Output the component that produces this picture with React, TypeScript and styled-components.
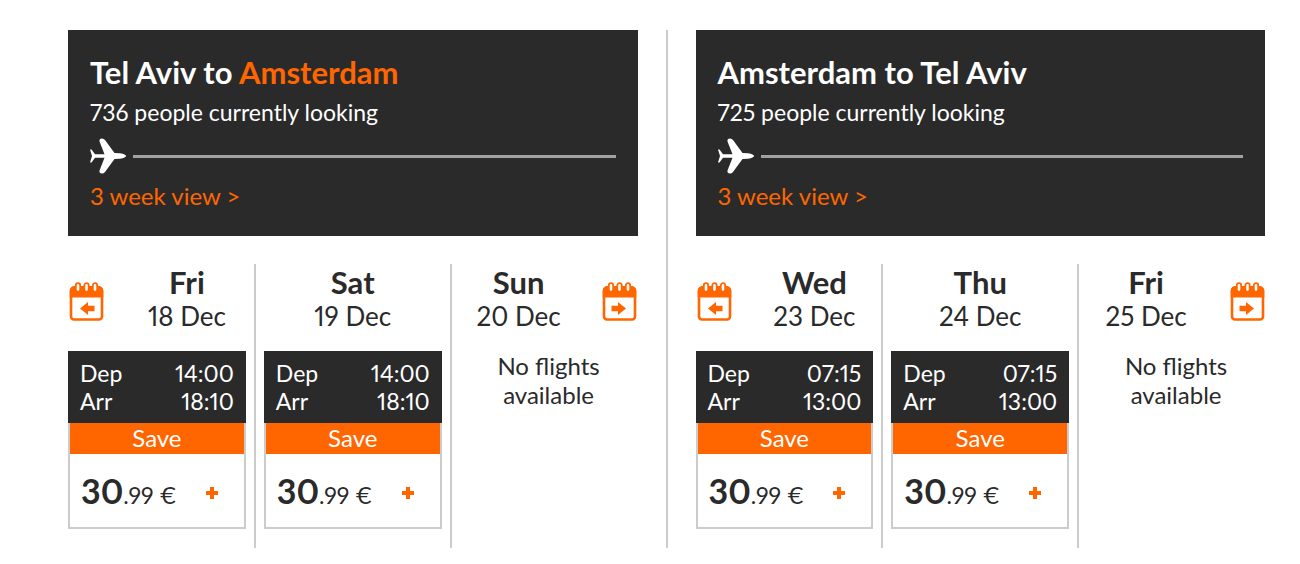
import React from 'react';
import styled, { createGlobalStyle } from 'styled-components';

const ink = '#2a2a2a';
const orange = '#ff6600';
const rule = '#cccccc';

const GlobalStyle = createGlobalStyle`
  *, *::before, *::after { box-sizing: border-box; }
  body {
    margin: 0;
    background: #ffffff;
    color: ${ink};
    font-family: Lato, "Liberation Sans", sans-serif;
    font-variant-numeric: proportional-nums;
  }
  h2, h3, p, dl, dt, dd { margin: 0; }
  button { font: inherit; color: inherit; border: 0; padding: 0; background: none; cursor: pointer; }
`;

const Page = styled.main`
  display: grid;
  grid-template-columns: minmax(0, 1fr) 2px minmax(0, 1fr);
  column-gap: 28px;
  padding: 30px 35px 16px 68px;
`;

const Divider = styled.div`
  background: ${rule};
`;

const Leg = styled.section`
  display: flex;
  flex-direction: column;
  gap: 28px;
`;

const Banner = styled.header`
  display: flex;
  flex-direction: column;
  align-items: stretch;
  padding: 24px 22px;
  height: 206px;
  background: ${ink};
  color: #ffffff;
`;

const Title = styled.h2`
  font-size: 31px;
  line-height: 36px;
  font-weight: 700;
  white-space: nowrap;
`;

const Highlight = styled.span`
  color: ${orange};
`;

const Looking = styled.p`
  font-size: 23px;
  line-height: 28px;
  margin-top: 8px;
  white-space: nowrap;
`;

const FlightPath = styled.div`
  display: flex;
  align-items: center;
  gap: 6px;
  margin-top: 12px;
  height: 36px;
`;

const Track = styled.div`
  flex: 1;
  height: 3px;
  background: #a3a0a0;
`;

const WeekLink = styled.a`
  align-self: flex-start;
  margin-top: 8px;
  font-size: 24px;
  line-height: 28px;
  color: ${orange};
  text-decoration: none;
`;

const Days = styled.div`
  display: grid;
  grid-template-columns: minmax(0, 1fr) 2px minmax(0, 1fr) 2px minmax(0, 1fr);
  column-gap: 8px;
`;

const Day = styled.article`
  padding-bottom: 19px;
`;

const DayHead = styled.div`
  display: flex;
  align-items: flex-start;
  gap: 24px;
  height: 87px;
`;

const DayLabel = styled.div`
  flex: 1;
  text-align: center;
  white-space: nowrap;
`;

const DayName = styled.h3`
  font-size: 31px;
  line-height: 36px;
  font-weight: 700;
`;

const DayDate = styled.p`
  font-size: 26px;
  line-height: 32px;
`;

const StepButton = styled.button`
  display: block;
  height: 40px;
  margin-top: 18px;
`;

const Fare = styled.div`
  display: flex;
  flex-direction: column;
  height: 178px;
  border: 2px solid ${rule};
  border-top: 0;
`;

const Times = styled.dl`
  display: grid;
  grid-template-columns: 1fr auto;
  margin: 0 -2px;
  padding: 8px 12px;
  height: 72px;
  font-size: 23px;
  line-height: 28px;
  text-align: right;
  background: ${ink};
  color: #ffffff;

  dt { text-align: left; }
`;

const Save = styled.div`
  height: 31px;
  font-size: 24px;
  line-height: 30px;
  text-align: center;
  background: ${orange};
  color: #ffffff;
`;

const PriceRow = styled.div`
  flex: 1;
  display: flex;
  align-items: center;
  justify-content: space-between;
  padding: 4px 26px 0 11px;
`;

const Price = styled.p`
  font-size: 23px;
  line-height: 36px;
  white-space: nowrap;
`;

const Whole = styled.strong`
  font-size: 34px;
  font-weight: 700;
`;

const Empty = styled.p`
  font-size: 24px;
  line-height: 29px;
  text-align: center;
`;

const Plane = () => (
  <svg width="37" height="36" viewBox="0 0 37 36" aria-hidden="true">
    <path
      fill="#ffffff"
      d="M0 11.5 L1.5 11.5 L5 16.2 L14.5 16.2 L9.5 3.5 Q9 0.5 12 0.5 Q13.8 0.5 15 2 L24.5 15 L30 15.2 Q36 16.2 36 18 Q36 19.8 30 20.8 L24.5 21 L15 34 Q13.8 35.5 12 35.5 Q9 35.5 9.5 32.5 L14.5 19.8 L5 19.8 L1.5 24.5 L0 24.5 L2 18 Z"
    />
  </svg>
);

const Calendar = ({ back = false }: { back?: boolean }) => (
  <svg width="36" height="40" viewBox="0 0 36 40" aria-hidden="true">
    <rect x="3" y="5.5" width="31" height="32" rx="3" fill="#ffffff" stroke={orange} strokeWidth="2.6" />
    <path fill={orange} d="M1.7 15.5 V9 Q2 5 6 4 H31 Q35 5 35.3 9 V15.5 Z" />
    {[10, 18.5, 27].map((x) => (
      <rect key={x} x={x - 2.2} y="1.2" width="4.4" height="8.6" rx="2.2" fill="#ffffff" stroke={orange} strokeWidth="1.8" />
    ))}
    <path
      fill={orange}
      transform={back ? undefined : 'translate(37 0) scale(-1 1)'}
      d="M12 26.5 L20 20 V23.8 H26.5 V29.2 H20 V33 Z"
    />
  </svg>
);

const Plus = () => (
  <svg width="12" height="12" viewBox="0 0 12 12" aria-hidden="true">
    <path fill={orange} d="M4 0 H8 V4 H12 V8 H8 V12 H4 V8 H0 V4 H4 Z" />
  </svg>
);

type DayInfo = { name: string; date: string; dep?: string; arr?: string };

const DayColumn = ({ day, step }: { day: DayInfo; step?: 'back' | 'forward' }) => (
  <Day>
    <DayHead>
      {step === 'back' && (
        <StepButton type="button" aria-label="Earlier dates">
          <Calendar back />
        </StepButton>
      )}
      <DayLabel>
        <DayName>{day.name}</DayName>
        <DayDate>{day.date}</DayDate>
      </DayLabel>
      {step === 'forward' && (
        <StepButton type="button" aria-label="Later dates">
          <Calendar />
        </StepButton>
      )}
    </DayHead>
    {day.dep ? (
      <Fare>
        <Times>
          <dt>Dep</dt>
          <dd>{day.dep}</dd>
          <dt>Arr</dt>
          <dd>{day.arr}</dd>
        </Times>
        <Save>Save</Save>
        <PriceRow>
          <Price>
            <Whole>30</Whole>.99 €
          </Price>
          <button type="button" aria-label="Add flight">
            <Plus />
          </button>
        </PriceRow>
      </Fare>
    ) : (
      <Empty>
        No flights
        <br />
        available
      </Empty>
    )}
  </Day>
);

const LegPanel = ({ title, looking, days }: { title: React.ReactNode; looking: number; days: DayInfo[] }) => (
  <Leg>
    <Banner>
      <Title>{title}</Title>
      <Looking>{looking} people currently looking</Looking>
      <FlightPath>
        <Plane />
        <Track />
      </FlightPath>
      <WeekLink href="#weeks">3 week view &gt;</WeekLink>
    </Banner>
    <Days>
      <DayColumn day={days[0]} step="back" />
      <Divider />
      <DayColumn day={days[1]} />
      <Divider />
      <DayColumn day={days[2]} step="forward" />
    </Days>
  </Leg>
);

const outbound: DayInfo[] = [
  { name: 'Fri', date: '18 Dec', dep: '14:00', arr: '18:10' },
  { name: 'Sat', date: '19 Dec', dep: '14:00', arr: '18:10' },
  { name: 'Sun', date: '20 Dec' },
];

const inbound: DayInfo[] = [
  { name: 'Wed', date: '23 Dec', dep: '07:15', arr: '13:00' },
  { name: 'Thu', date: '24 Dec', dep: '07:15', arr: '13:00' },
  { name: 'Fri', date: '25 Dec' },
];

export default function App() {
  return (
    <>
      <GlobalStyle />
      <Page>
        <LegPanel
          title={
            <>
              Tel Aviv to <Highlight>Amsterdam</Highlight>
            </>
          }
          looking={736}
          days={outbound}
        />
        <Divider />
        <LegPanel title="Amsterdam to Tel Aviv" looking={725} days={inbound} />
      </Page>
    </>
  );
}
